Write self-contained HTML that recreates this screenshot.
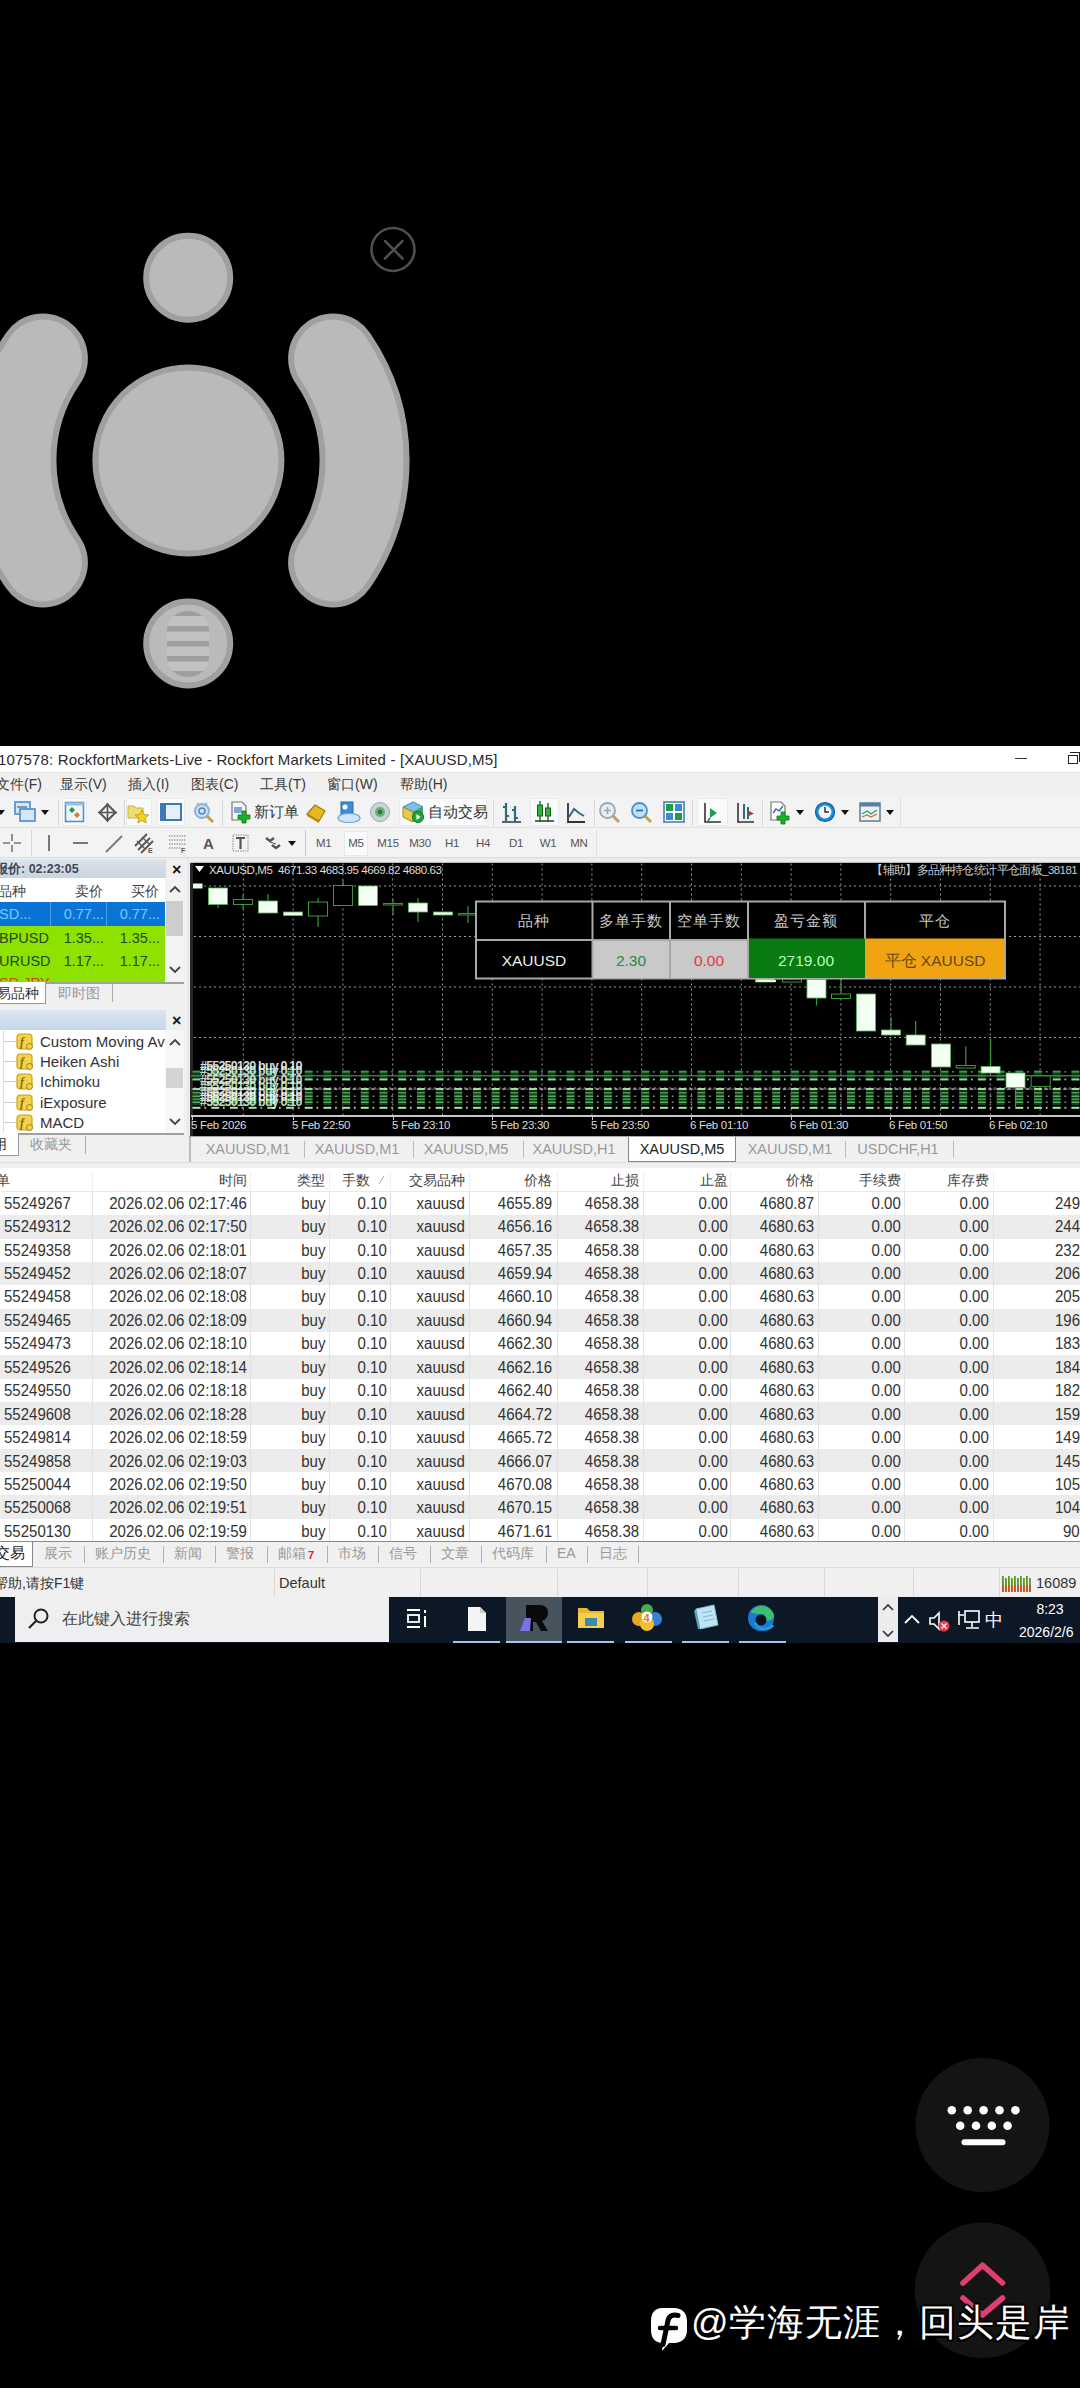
<!DOCTYPE html>
<html><head><meta charset="utf-8">
<style>
*{margin:0;padding:0;box-sizing:border-box}
html,body{width:1080px;height:2388px;background:#000;overflow:hidden;font-family:"Liberation Sans",sans-serif;position:relative}
.a{position:absolute}
.t{position:absolute;white-space:nowrap;line-height:1}
svg{position:absolute;overflow:visible}
.tl,.tr{font-size:15.8px;color:#333;transform:scaleX(0.95)}
.tl{transform-origin:left}
.tr{transform-origin:right}
</style></head><body>

<svg style="left:0;top:0" width="1080" height="745" viewBox="0 0 1080 745">
<defs><clipPath id="pill"><rect x="167" y="611" width="42" height="66" rx="21" ry="19"/></clipPath></defs>
<g fill="#bababa" stroke="#a0a0a0" stroke-width="6">
<circle cx="188.2" cy="277.8" r="42"/>
<circle cx="188.4" cy="460.5" r="93"/>
<circle cx="188.2" cy="643.5" r="42"/>
</g>
<path d="M333.1,358.5 A181,181 0 0 1 333.1,562.5" fill="none" stroke="#a0a0a0" stroke-width="90" stroke-linecap="round"/>
<path d="M333.1,358.5 A181,181 0 0 1 333.1,562.5" fill="none" stroke="#bababa" stroke-width="78" stroke-linecap="round"/>
<path d="M42.9,358.5 A181,181 0 0 0 42.9,562.5" fill="none" stroke="#a0a0a0" stroke-width="90" stroke-linecap="round"/>
<path d="M42.9,358.5 A181,181 0 0 0 42.9,562.5" fill="none" stroke="#bababa" stroke-width="78" stroke-linecap="round"/>
<g clip-path="url(#pill)">
<rect x="167" y="611" width="42" height="66" fill="#c2c2c2"/>
<g fill="#9e9e9e">
<rect x="166" y="610" width="44" height="6"/>
<rect x="166" y="626" width="44" height="5.5"/>
<rect x="166" y="641" width="44" height="5.5"/>
<rect x="166" y="656" width="44" height="5.5"/>
<rect x="166" y="671" width="44" height="7"/>
</g></g>
<circle cx="393" cy="249.5" r="21.5" fill="none" stroke="#505050" stroke-width="2.5"/>
<path d="M385,241 L402.5,258.5 M402.5,241 L385,258.5" stroke="#505050" stroke-width="2.5" stroke-linecap="round"/>
</svg>

<div class="a" style="left:0px;top:746px;width:1080px;height:897px;background:#f0f0f0;"></div>
<div class="a" style="left:0px;top:746px;width:1080px;height:26px;background:#ffffff;"></div>
<div class="t" style="left:-2px;top:752px;font-size:15px;color:#2a2a2a;letter-spacing:0.16px">107578: RockfortMarkets-Live - Rockfort Markets Limited - [XAUUSD,M5]</div>
<div class="a" style="left:1014.5px;top:757.5px;width:12.5px;height:1.5px;background:#333;"></div>
<div class="a" style="left:1070px;top:752px;width:9.5px;height:9.5px;border-top:1.5px solid #222;border-right:1.5px solid #222"></div>
<div class="a" style="left:1067.5px;top:754.5px;width:10px;height:9.5px;border:1.5px solid #222;background:#fff"></div>
<div class="a" style="left:0px;top:771.5px;width:1080px;height:1.5px;background:#e4e4e4;"></div>
<div class="a" style="left:0px;top:773px;width:1080px;height:23px;background:#f0f0f0;"></div>
<div class="a" style="left:0px;top:796px;width:1080px;height:1px;background:#d6d6d6;"></div>
<div class="t" style="left:-4px;top:777px;font-size:14px;color:#3a3a3a;">文件(F)</div>
<div class="t" style="left:60px;top:777px;font-size:14px;color:#3a3a3a;">显示(V)</div>
<div class="t" style="left:128px;top:777px;font-size:14px;color:#3a3a3a;">插入(I)</div>
<div class="t" style="left:191px;top:777px;font-size:14px;color:#3a3a3a;">图表(C)</div>
<div class="t" style="left:260px;top:777px;font-size:14px;color:#3a3a3a;">工具(T)</div>
<div class="t" style="left:327px;top:777px;font-size:14px;color:#3a3a3a;">窗口(W)</div>
<div class="t" style="left:400px;top:777px;font-size:14px;color:#3a3a3a;">帮助(H)</div>
<div class="a" style="left:0px;top:796px;width:1080px;height:32px;background:#f3f3f3;"></div>
<div class="a" style="left:0px;top:828px;width:1080px;height:30px;background:#f3f3f3;"></div>
<div class="a" style="left:0px;top:827px;width:1080px;height:1px;background:#e2e2e2;"></div>
<div class="a" style="left:0px;top:857px;width:1080px;height:1px;background:#dcdcdc;"></div>
<svg style="left:-3px;top:810px" width="8" height="5" viewBox="0 0 8 5"><path d="M0,0 L8,0 L4,5 Z" fill="#111"/></svg>
<svg style="left:14px;top:801px" width="22" height="22" viewBox="0 0 22 22"><rect x="1" y="1" width="15" height="12" fill="#d4e6f7" stroke="#4a8ac8" stroke-width="1.6"/><rect x="6" y="8" width="15" height="12" fill="#d4e6f7" stroke="#4a8ac8" stroke-width="1.6"/><rect x="3" y="5" width="10" height="2" fill="#7a9ab0"/></svg>
<svg style="left:41px;top:810px" width="8" height="5" viewBox="0 0 8 5"><path d="M0,0 L8,0 L4,5 Z" fill="#111"/></svg>
<div class="a" style="left:58px;top:800px;width:1px;height:26px;background:#d8d8d8;"></div>
<div class="a" style="left:62px;top:798px;width:25px;height:28px;background:#f9fbfd;border:1px solid #e6e9ee"></div>
<svg style="left:64px;top:801px" width="22" height="22" viewBox="0 0 22 22"><rect x="1.5" y="1.5" width="18" height="19" fill="#eef5fb" stroke="#5a8fc0" stroke-width="1.6"/><rect x="1.5" y="1.5" width="18" height="3" fill="#9cc3e6"/><path d="M5,9 l3,-3 l3,3 l-3,3z" fill="#1f9a3a"/><path d="M10,14 l3,-3 l3,3 l-3,3z" fill="#e07a30"/></svg>
<svg style="left:98px;top:803px" width="19" height="19" viewBox="0 0 19 19"><path d="M9.5,1.5 L17.5,9.5 L9.5,17.5 L1.5,9.5 Z" fill="none" stroke="#555" stroke-width="2"/><path d="M9.5,0 V19 M0,9.5 H19" stroke="#555" stroke-width="1.6"/></svg>
<div class="a" style="left:124px;top:800px;width:1px;height:26px;background:#d8d8d8;"></div>
<div class="a" style="left:126px;top:798px;width:26px;height:28px;background:#f9fbfd;border:1px solid #e6e9ee"></div>
<svg style="left:127px;top:802px" width="23" height="21" viewBox="0 0 23 21"><path d="M1,4 h6 l2,2 h7 v10 h-15z" fill="#f0dc70" stroke="#c8b040" stroke-width="1"/><path d="M15,8 l2,4.5 l4.8,0.5 l-3.6,3.2 l1,4.8 l-4.2,-2.5 l-4.2,2.5 l1,-4.8 l-3.6,-3.2 l4.8,-0.5z" fill="#f6d21c" stroke="#b09010" stroke-width="0.8"/></svg>
<div class="a" style="left:157px;top:798px;width:28px;height:28px;background:#f9fbfd;border:1px solid #e6e9ee"></div>
<svg style="left:160px;top:803px" width="22" height="18" viewBox="0 0 22 18"><rect x="1" y="1" width="20" height="16" fill="#e6f0f8" stroke="#3d7ab5" stroke-width="2"/><rect x="1" y="1" width="5" height="16" fill="#3d7ab5"/></svg>
<svg style="left:193px;top:801px" width="22" height="23" viewBox="0 0 22 23"><circle cx="9" cy="10" r="7" fill="#cfe3f3" stroke="#8fb4d6" stroke-width="2"/><circle cx="9" cy="10" r="3" fill="none" stroke="#4a8ac8" stroke-width="1.5"/><path d="M14,15 l6,6" stroke="#c8a040" stroke-width="3"/><path d="M4,2 l3,3 M14,2 l-3,3" stroke="#8fb4d6" stroke-width="1.5"/></svg>
<div class="a" style="left:222px;top:800px;width:1px;height:26px;background:#d8d8d8;"></div>
<svg style="left:230px;top:801px" width="22" height="24" viewBox="0 0 22 24"><path d="M2,1 h10 l4,4 v14 h-14z" fill="#f6f6f6" stroke="#777" stroke-width="1.2"/><rect x="4" y="6" width="8" height="6" fill="#7aa8d0"/><path d="M12,10 h4 v4 h4 v4 h-4 v4 h-4 v-4 h-4 v-4 h4z" fill="#19b02a" stroke="#0d7a18" stroke-width="0.8"/></svg>
<div class="t" style="left:254px;top:804px;font-size:15px;color:#333;">新订单</div>
<svg style="left:305px;top:802px" width="22" height="22" viewBox="0 0 22 22"><path d="M2,12 L10,3 L20,9 L14,19 Z" fill="#e8b820" stroke="#a07810" stroke-width="1.2"/><path d="M2,12 L14,19 L14,21 L2,14z" fill="#b88a10"/></svg>
<svg style="left:337px;top:801px" width="24" height="22" viewBox="0 0 24 22"><rect x="4" y="1" width="12" height="13" fill="#3b8fd8" stroke="#2a6aa8" stroke-width="1"/><circle cx="8" cy="6" r="2.5" fill="#fff"/><ellipse cx="12" cy="17" rx="11" ry="4.5" fill="#d0e6f8" stroke="#6aa0d0" stroke-width="1.2"/></svg>
<svg style="left:369px;top:801px" width="22" height="22" viewBox="0 0 22 22"><circle cx="11" cy="11" r="9.5" fill="#c9d3da" stroke="#9aa8b2" stroke-width="1"/><circle cx="11" cy="11" r="5" fill="#5fb36a"/><circle cx="11" cy="11" r="2.2" fill="#2e6e38"/></svg>
<div class="a" style="left:399px;top:798px;width:88px;height:28px;background:#f9fbfd;border:1px solid #e6e9ee"></div>
<svg style="left:401px;top:801px" width="24" height="23" viewBox="0 0 24 23"><path d="M2,6 L12,1 L22,6 L12,11z" fill="#7ac0e8" stroke="#3d8ac0" stroke-width="1"/><path d="M2,6 v10 l10,5 v-10z" fill="#e6c84a" stroke="#a08a20" stroke-width="1"/><path d="M22,6 v10 l-10,5 v-10z" fill="#4aa060"/><circle cx="17" cy="16" r="5.5" fill="#1eaa3a" stroke="#0e7a20" stroke-width="1"/><path d="M15.5,13 l4,3 l-4,3z" fill="#fff"/></svg>
<div class="t" style="left:428px;top:804px;font-size:15px;color:#333;">自动交易</div>
<div class="a" style="left:493px;top:800px;width:1px;height:26px;background:#d8d8d8;"></div>
<svg style="left:500px;top:801px" width="22" height="23" viewBox="0 0 22 23"><path d="M6,2 v18 M3,6 h3 M6,15 h3 M15,5 v15 M12,9 h3 M15,17 h3" stroke="#2d6e78" stroke-width="2.2" fill="none"/><path d="M2,21 h19" stroke="#333" stroke-width="1.5"/></svg>
<div class="a" style="left:530px;top:798px;width:29px;height:28px;background:#f9fbfd;border:1px solid #e6e9ee"></div>
<svg style="left:533px;top:800px" width="22" height="24" viewBox="0 0 22 24"><path d="M7,1 v21 M15,3 v19" stroke="#2a7a2a" stroke-width="1.5"/><rect x="4.5" y="5" width="5" height="11" fill="#30b040" stroke="#106010" stroke-width="1"/><rect x="12.5" y="8" width="5" height="8" fill="#30b040" stroke="#106010" stroke-width="1"/><path d="M2,21 h19" stroke="#333" stroke-width="1.5"/></svg>
<svg style="left:565px;top:801px" width="22" height="23" viewBox="0 0 22 23"><path d="M3,2 v19 h17" stroke="#333" stroke-width="1.8" fill="none"/><path d="M4,16 L9,8 L14,12 L19,15" stroke="#2d6e78" stroke-width="2" fill="none"/></svg>
<div class="a" style="left:594px;top:800px;width:1px;height:26px;background:#d8d8d8;"></div>
<svg style="left:598px;top:801px" width="24" height="24" viewBox="0 0 24 24"><circle cx="9.5" cy="9.5" r="7.5" fill="#e8eef2" stroke="#9aa8b2" stroke-width="1.8"/><path d="M6,9.5 h7 M9.5,6 v7" stroke="#9aa8b2" stroke-width="1.6"/><path d="M15,15 l6,6" stroke="#b8a070" stroke-width="3"/></svg>
<svg style="left:630px;top:801px" width="24" height="24" viewBox="0 0 24 24"><circle cx="9.5" cy="9.5" r="7.5" fill="#bfe0f6" stroke="#4a90c8" stroke-width="1.8"/><path d="M6,9.5 h7" stroke="#2a70a8" stroke-width="1.8"/><path d="M15,15 l6,6" stroke="#c8a040" stroke-width="3"/></svg>
<svg style="left:663px;top:801px" width="22" height="22" viewBox="0 0 22 22"><rect x="1" y="1" width="20" height="20" fill="#fff" stroke="#3d7ab5" stroke-width="1.5"/><rect x="3" y="3" width="7" height="7" fill="#1aa04a"/><rect x="12" y="3" width="7" height="7" fill="#3a8ad0"/><rect x="3" y="12" width="7" height="7" fill="#3a8ad0"/><rect x="12" y="12" width="7" height="7" fill="#1aa04a"/></svg>
<div class="a" style="left:692px;top:800px;width:1px;height:26px;background:#d8d8d8;"></div>
<div class="a" style="left:697px;top:798px;width:31px;height:28px;background:#f9fbfd;border:1px solid #e6e9ee"></div>
<svg style="left:701px;top:801px" width="22" height="23" viewBox="0 0 22 23"><path d="M4,2 v19 h16" stroke="#333" stroke-width="1.6" fill="none"/><path d="M9,7 v10 l7,-5z" fill="#1ea050"/><path d="M7,20 l2,-3" stroke="#2d6e78" stroke-width="1.5"/></svg>
<svg style="left:734px;top:801px" width="22" height="23" viewBox="0 0 22 23"><path d="M4,2 v19 h16" stroke="#333" stroke-width="1.6" fill="none"/><path d="M10,3 v15 M14,6 v12" stroke="#2d6e78" stroke-width="2"/><path d="M15,10 l5,2.5 l-5,2.5z" fill="#d03030"/></svg>
<div class="a" style="left:762px;top:800px;width:1px;height:26px;background:#d8d8d8;"></div>
<svg style="left:769px;top:801px" width="24" height="24" viewBox="0 0 24 24"><path d="M2,1 h10 l4,4 v14 h-14z" fill="#fff" stroke="#777" stroke-width="1.2"/><path d="M4,12 l3,-4 l3,2 l4,-5" stroke="#2a70a8" stroke-width="1.4" fill="none"/><path d="M12,11 h4 v4 h4 v4 h-4 v4 h-4 v-4 h-4 v-4 h4z" fill="#19b02a" stroke="#0d7a18" stroke-width="0.8"/></svg>
<svg style="left:796px;top:810px" width="8" height="5" viewBox="0 0 8 5"><path d="M0,0 L8,0 L4,5 Z" fill="#111"/></svg>
<svg style="left:814px;top:801px" width="22" height="22" viewBox="0 0 22 22"><circle cx="11" cy="11" r="9.5" fill="#1e8ad8" stroke="#0f5fa8" stroke-width="1.2"/><circle cx="11" cy="11" r="6.5" fill="#f4f8fc"/><path d="M11,6 v5 h4" stroke="#333" stroke-width="1.5" fill="none"/></svg>
<svg style="left:841px;top:810px" width="8" height="5" viewBox="0 0 8 5"><path d="M0,0 L8,0 L4,5 Z" fill="#111"/></svg>
<svg style="left:859px;top:802px" width="22" height="20" viewBox="0 0 22 20"><rect x="1" y="1" width="20" height="18" fill="#eaf2f8" stroke="#5a7fa0" stroke-width="1.5"/><rect x="1" y="1" width="20" height="3.5" fill="#5a7fa0"/><path d="M3,12 l5,-3 l4,3 l6,-4" stroke="#30a050" stroke-width="1.4" fill="none"/><path d="M3,15 l5,-2 l4,2 l6,-3" stroke="#d06a30" stroke-width="1.2" fill="none"/></svg>
<svg style="left:886px;top:810px" width="8" height="5" viewBox="0 0 8 5"><path d="M0,0 L8,0 L4,5 Z" fill="#111"/></svg>
<div class="a" style="left:900px;top:798px;width:1px;height:28px;background:#e0e0e0;"></div>
<svg style="left:2px;top:833px" width="20" height="20" viewBox="0 0 20 20"><path d="M10,1 v7 M10,12 v7 M1,10 h7 M12,10 h7" stroke="#777" stroke-width="1.6"/></svg>
<div class="a" style="left:31px;top:830px;width:1px;height:26px;background:#d8d8d8;"></div>
<div class="a" style="left:48px;top:835px;width:2px;height:16px;background:#777;"></div>
<div class="a" style="left:73px;top:842px;width:15px;height:2px;background:#777;"></div>
<svg style="left:104px;top:834px" width="20" height="20" viewBox="0 0 20 20"><path d="M2,18 L18,2" stroke="#777" stroke-width="1.8"/></svg>
<svg style="left:134px;top:833px" width="21" height="20" viewBox="0 0 21 20"><path d="M1,13 L13,1 M4,17 L16,5 M7,20 L19,8" stroke="#555" stroke-width="1.8"/><path d="M3,8 l8,8 M8,4 l8,8" stroke="#555" stroke-width="1.2"/><text x="14" y="20" font-size="7" font-weight="bold" fill="#555" font-family="Liberation Sans">E</text></svg>
<svg style="left:168px;top:834px" width="20" height="20" viewBox="0 0 20 20"><path d="M1,2 h17 M1,6 h17 M1,10 h17 M1,14 h12" stroke="#777" stroke-width="1.2" stroke-dasharray="1.5 1"/><text x="13" y="19" font-size="7" font-weight="bold" fill="#555" font-family="Liberation Sans">F</text></svg>
<div class="t" style="left:203px;top:836px;font-size:15px;color:#555;font-weight:bold">A</div>
<svg style="left:232px;top:833px" width="17" height="19" viewBox="0 0 17 19"><rect x="1" y="2" width="15" height="16" fill="none" stroke="#888" stroke-width="1" stroke-dasharray="1.5 1"/><path d="M4,5 h9 M8.5,5 v11" stroke="#555" stroke-width="2.2"/></svg>
<svg style="left:264px;top:834px" width="18" height="18" viewBox="0 0 18 18"><path d="M2,4 l4,3 l4,-3 M8,11 l4,3 l4,-3" stroke="#555" stroke-width="2.4" fill="none"/><path d="M6,8 L12,10" stroke="#555" stroke-width="1"/></svg>
<svg style="left:288px;top:841px" width="8" height="5" viewBox="0 0 8 5"><path d="M0,0 L8,0 L4,5 Z" fill="#111"/></svg>
<div class="a" style="left:305px;top:830px;width:1px;height:26px;background:#c8c8c8;"></div>
<div class="t" style="left:303.6px;width:40px;text-align:center;top:838px;font-size:11.5px;color:#555;letter-spacing:-0.3px">M1</div>
<div class="a" style="left:344px;top:831px;width:24px;height:25px;background:#f9fbfd;border:1px solid #e6e9ee"></div>
<div class="t" style="left:336px;width:40px;text-align:center;top:838px;font-size:11.5px;color:#555;letter-spacing:-0.3px">M5</div>
<div class="t" style="left:368px;width:40px;text-align:center;top:838px;font-size:11.5px;color:#555;letter-spacing:-0.3px">M15</div>
<div class="t" style="left:400px;width:40px;text-align:center;top:838px;font-size:11.5px;color:#555;letter-spacing:-0.3px">M30</div>
<div class="t" style="left:432px;width:40px;text-align:center;top:838px;font-size:11.5px;color:#555;letter-spacing:-0.3px">H1</div>
<div class="t" style="left:463px;width:40px;text-align:center;top:838px;font-size:11.5px;color:#555;letter-spacing:-0.3px">H4</div>
<div class="t" style="left:496px;width:40px;text-align:center;top:838px;font-size:11.5px;color:#555;letter-spacing:-0.3px">D1</div>
<div class="t" style="left:528px;width:40px;text-align:center;top:838px;font-size:11.5px;color:#555;letter-spacing:-0.3px">W1</div>
<div class="t" style="left:559px;width:40px;text-align:center;top:838px;font-size:11.5px;color:#555;letter-spacing:-0.3px">MN</div>
<div class="a" style="left:596px;top:830px;width:1px;height:26px;background:#e0e0e0;"></div>
<div class="a" style="left:0px;top:858px;width:189px;height:280px;background:#f0f0f0;"></div>
<div class="a" style="left:0px;top:859px;width:166px;height:19px;background:linear-gradient(#dde4ec,#c9d4e0);"></div>
<div class="t" style="left:-5px;top:862.5px;font-size:12.5px;color:#3d4856;font-weight:bold">报价: 02:23:05</div>
<div class="t" style="left:172px;top:862px;font-size:16px;color:#111;font-weight:bold">×</div>
<div class="a" style="left:0px;top:878px;width:166px;height:24px;background:#ffffff;"></div>
<div class="t" style="left:-2px;top:884px;font-size:14px;color:#444;">品种</div>
<div class="t" style="right:977px;top:884px;font-size:14px;color:#444;">卖价</div>
<div class="t" style="right:921px;top:884px;font-size:14px;color:#444;">买价</div>
<div class="a" style="left:0px;top:902px;width:165px;height:24px;background:#0a74d6;"></div>
<div class="a" style="left:50px;top:902px;width:1px;height:24px;background:#4a9ee6;"></div>
<div class="a" style="left:106px;top:902px;width:1px;height:24px;background:#4a9ee6;"></div>
<div class="t" style="left:-1px;top:907px;font-size:14.5px;color:#78c8ff;">SD...</div>
<div class="t" style="right:976px;top:907px;font-size:14.5px;color:#78c8ff;">0.77...</div>
<div class="t" style="right:920px;top:907px;font-size:14.5px;color:#78c8ff;">0.77...</div>
<div class="a" style="left:0px;top:926px;width:165px;height:56px;background:#8ee200;"></div>
<div class="t" style="left:-1px;top:931px;font-size:14.5px;color:#1f4a1a;">BPUSD</div>
<div class="t" style="right:976px;top:931px;font-size:14.5px;color:#1f4a1a;">1.35...</div>
<div class="t" style="right:920px;top:931px;font-size:14.5px;color:#1f4a1a;">1.35...</div>
<div class="t" style="left:-1px;top:954px;font-size:14.5px;color:#1f4a1a;">URUSD</div>
<div class="t" style="right:976px;top:954px;font-size:14.5px;color:#1f4a1a;">1.17...</div>
<div class="t" style="right:920px;top:954px;font-size:14.5px;color:#1f4a1a;">1.17...</div>
<div class="t" style="left:-1px;top:976px;font-size:14.5px;color:#c84a00;clip-path:inset(0 0 62% 0)">SD JPY</div>
<div class="a" style="left:165px;top:878px;width:19px;height:104px;background:#f3f3f3;"></div>
<svg style="left:168px;top:884px" width="14" height="10" viewBox="0 0 14 10"><path d="M2,8 L7,3 L12,8" stroke="#444" stroke-width="1.8" fill="none"/></svg>
<div class="a" style="left:166px;top:901px;width:17px;height:35px;background:#cdcdcd;"></div>
<svg style="left:168px;top:965px" width="14" height="10" viewBox="0 0 14 10"><path d="M2,2 L7,7 L12,2" stroke="#444" stroke-width="1.8" fill="none"/></svg>
<div class="a" style="left:0px;top:982px;width:184px;height:1.5px;background:#a0a0a0;"></div>
<div class="a" style="left:0px;top:982px;width:46px;height:22px;background:#ffffff;border:1px solid #999;border-top:none;border-left:none"></div>
<div class="t" style="left:-3px;top:986px;font-size:14px;color:#333;">易品种</div>
<div class="t" style="left:58px;top:986px;font-size:14px;color:#999;">即时图</div>
<div class="a" style="left:112px;top:984px;width:1px;height:18px;background:#aaa;"></div>
<div class="a" style="left:187px;top:858px;width:2px;height:280px;background:#e8e8e8;"></div>
<div class="a" style="left:0px;top:1010px;width:166px;height:20px;background:linear-gradient(#dbe6f2,#c5d7ea);"></div>
<div class="t" style="left:172px;top:1013px;font-size:16px;color:#111;font-weight:bold">×</div>
<div class="a" style="left:0px;top:1030px;width:184px;height:103px;background:#ffffff;"></div>
<div class="a" style="left:4px;top:1041.0px;width:12px;height:1px;background:#ccc;"></div>
<svg style="left:16px;top:1033.0px" width="18" height="18" viewBox="0 0 18 18"><rect x="1" y="1" width="15" height="15" rx="3" fill="#f3d34a" stroke="#c9a21a" stroke-width="1.2"/><text x="4" y="13" font-size="12" font-style="italic" font-weight="bold" fill="#8a6a10" font-family="Liberation Serif">f</text><circle cx="13.5" cy="13.5" r="3" fill="#f3d34a" stroke="#a08010" stroke-width="1"/></svg>
<div class="t" style="left:40px;top:1034.0px;font-size:15px;color:#333;">Custom Moving Av</div>
<div class="a" style="left:4px;top:1061.2px;width:12px;height:1px;background:#ccc;"></div>
<svg style="left:16px;top:1053.2px" width="18" height="18" viewBox="0 0 18 18"><rect x="1" y="1" width="15" height="15" rx="3" fill="#f3d34a" stroke="#c9a21a" stroke-width="1.2"/><text x="4" y="13" font-size="12" font-style="italic" font-weight="bold" fill="#8a6a10" font-family="Liberation Serif">f</text><circle cx="13.5" cy="13.5" r="3" fill="#f3d34a" stroke="#a08010" stroke-width="1"/></svg>
<div class="t" style="left:40px;top:1054.2px;font-size:15px;color:#333;">Heiken Ashi</div>
<div class="a" style="left:4px;top:1081.4px;width:12px;height:1px;background:#ccc;"></div>
<svg style="left:16px;top:1073.4px" width="18" height="18" viewBox="0 0 18 18"><rect x="1" y="1" width="15" height="15" rx="3" fill="#f3d34a" stroke="#c9a21a" stroke-width="1.2"/><text x="4" y="13" font-size="12" font-style="italic" font-weight="bold" fill="#8a6a10" font-family="Liberation Serif">f</text><circle cx="13.5" cy="13.5" r="3" fill="#f3d34a" stroke="#a08010" stroke-width="1"/></svg>
<div class="t" style="left:40px;top:1074.4px;font-size:15px;color:#333;">Ichimoku</div>
<div class="a" style="left:4px;top:1101.6px;width:12px;height:1px;background:#ccc;"></div>
<svg style="left:16px;top:1093.6px" width="18" height="18" viewBox="0 0 18 18"><rect x="1" y="1" width="15" height="15" rx="3" fill="#f3d34a" stroke="#c9a21a" stroke-width="1.2"/><text x="4" y="13" font-size="12" font-style="italic" font-weight="bold" fill="#8a6a10" font-family="Liberation Serif">f</text><circle cx="13.5" cy="13.5" r="3" fill="#f3d34a" stroke="#a08010" stroke-width="1"/></svg>
<div class="t" style="left:40px;top:1094.6px;font-size:15px;color:#333;">iExposure</div>
<div class="a" style="left:4px;top:1121.8px;width:12px;height:1px;background:#ccc;"></div>
<svg style="left:16px;top:1113.8px" width="18" height="18" viewBox="0 0 18 18"><rect x="1" y="1" width="15" height="15" rx="3" fill="#f3d34a" stroke="#c9a21a" stroke-width="1.2"/><text x="4" y="13" font-size="12" font-style="italic" font-weight="bold" fill="#8a6a10" font-family="Liberation Serif">f</text><circle cx="13.5" cy="13.5" r="3" fill="#f3d34a" stroke="#a08010" stroke-width="1"/></svg>
<div class="t" style="left:40px;top:1114.8px;font-size:15px;color:#333;">MACD</div>
<div class="a" style="left:3px;top:1030px;width:1px;height:103px;background:#ddd;"></div>
<div class="a" style="left:165px;top:1030px;width:19px;height:103px;background:#f7f7f7;"></div>
<svg style="left:168px;top:1037px" width="14" height="10" viewBox="0 0 14 10"><path d="M2,8 L7,3 L12,8" stroke="#444" stroke-width="1.8" fill="none"/></svg>
<div class="a" style="left:166px;top:1068px;width:17px;height:20px;background:#d4d4d4;"></div>
<svg style="left:168px;top:1117px" width="14" height="10" viewBox="0 0 14 10"><path d="M2,2 L7,7 L12,2" stroke="#444" stroke-width="1.8" fill="none"/></svg>
<div class="a" style="left:0px;top:1133px;width:184px;height:1.5px;background:#a0a0a0;"></div>
<div class="a" style="left:0px;top:1133px;width:19px;height:23px;background:#ffffff;border:1px solid #999;border-top:none;border-left:none"></div>
<div class="t" style="left:-7px;top:1137px;font-size:14px;color:#333;">用</div>
<div class="t" style="left:30px;top:1137px;font-size:14px;color:#999;">收藏夹</div>
<div class="a" style="left:85px;top:1136px;width:1px;height:18px;background:#aaa;"></div>
<div class="a" style="left:189px;top:858px;width:891px;height:5px;background:#ececec;"></div>
<div class="a" style="left:191px;top:861.5px;width:889px;height:1.5px;background:#b8b8b8;"></div>
<div class="a" style="left:190px;top:863px;width:890px;height:273px;background:#000;"></div>
<div class="a" style="left:190px;top:863px;width:3px;height:273px;background:#262626;"></div>
<div class="a" style="left:189px;top:1136px;width:891px;height:3px;background:#a8a8a8;"></div>
<svg style="left:191px;top:860px" width="889" height="277" viewBox="0 0 889 277"><path d="M52.3,3.5 V255" stroke="#9a9a9a" stroke-width="1" stroke-dasharray="2 3"/><path d="M102.1,3.5 V255" stroke="#9a9a9a" stroke-width="1" stroke-dasharray="2 3"/><path d="M151.9,3.5 V255" stroke="#9a9a9a" stroke-width="1" stroke-dasharray="2 3"/><path d="M201.7,3.5 V255" stroke="#9a9a9a" stroke-width="1" stroke-dasharray="2 3"/><path d="M251.5,3.5 V255" stroke="#9a9a9a" stroke-width="1" stroke-dasharray="2 3"/><path d="M301.3,3.5 V255" stroke="#9a9a9a" stroke-width="1" stroke-dasharray="2 3"/><path d="M351.1,3.5 V255" stroke="#9a9a9a" stroke-width="1" stroke-dasharray="2 3"/><path d="M400.9,3.5 V255" stroke="#9a9a9a" stroke-width="1" stroke-dasharray="2 3"/><path d="M450.7,3.5 V255" stroke="#9a9a9a" stroke-width="1" stroke-dasharray="2 3"/><path d="M500.5,3.5 V255" stroke="#9a9a9a" stroke-width="1" stroke-dasharray="2 3"/><path d="M550.3,3.5 V255" stroke="#9a9a9a" stroke-width="1" stroke-dasharray="2 3"/><path d="M600.1,3.5 V255" stroke="#9a9a9a" stroke-width="1" stroke-dasharray="2 3"/><path d="M649.9,3.5 V255" stroke="#9a9a9a" stroke-width="1" stroke-dasharray="2 3"/><path d="M699.7,3.5 V255" stroke="#9a9a9a" stroke-width="1" stroke-dasharray="2 3"/><path d="M749.5,3.5 V255" stroke="#9a9a9a" stroke-width="1" stroke-dasharray="2 3"/><path d="M799.3,3.5 V255" stroke="#9a9a9a" stroke-width="1" stroke-dasharray="2 3"/><path d="M849.1,3.5 V255" stroke="#9a9a9a" stroke-width="1" stroke-dasharray="2 3"/><path d="M3,26 H889" stroke="#9a9a9a" stroke-width="1" stroke-dasharray="2 3"/><path d="M3,76.5 H889" stroke="#9a9a9a" stroke-width="1" stroke-dasharray="2 3"/><path d="M3,127 H889" stroke="#9a9a9a" stroke-width="1" stroke-dasharray="2 3"/><path d="M3,177.5 H889" stroke="#9a9a9a" stroke-width="1" stroke-dasharray="2 3"/><path d="M3,228 H889" stroke="#9a9a9a" stroke-width="1" stroke-dasharray="2 3"/></svg>
<svg style="left:195px;top:866px" width="10" height="7" viewBox="0 0 10 7"><path d="M0,0 H9 L4.5,6z" fill="#fff"/></svg>
<div class="t" style="left:209px;top:865px;font-size:11.5px;color:#ddd;letter-spacing:-0.4px">XAUUSD,M5&nbsp;&nbsp;4671.33 4683.95 4669.82 4680.63</div>
<div class="t" style="right:3px;top:865px;font-size:11.5px;color:#ccc;letter-spacing:-0.6px">【辅助】多品种持仓统计平仓面板_38181</div>
<svg style="left:0px;top:0px" width="1080" height="1200" viewBox="0 0 1080 1200"><defs>
<pattern id="pb" x="510.4" y="1070" width="18.7" height="40" patternUnits="userSpaceOnUse">
<rect x="0" y="0" width="8" height="11" fill="#0f3a16"/>
<rect x="0" y="1" width="8" height="1.6" fill="#3f9a4a"/>
<rect x="0" y="5.2" width="18.7" height="1.2" fill="#4a9058"/>
<rect x="0" y="8.5" width="8" height="1.8" fill="#8ccf96"/>
<rect x="11.8" y="8.5" width="1.6" height="1.8" fill="#bbb"/>
<rect x="11.8" y="1" width="1.6" height="1.6" fill="#888"/>
<rect x="0" y="18" width="8" height="2.2" fill="#a8d8ac"/>
<rect x="10.5" y="18.3" width="3.5" height="1.6" fill="#aaa"/>
<rect x="15" y="18.6" width="3" height="1" fill="#777"/>
<rect x="0" y="21" width="8" height="14" fill="#123f19"/>
<rect x="0" y="22" width="8" height="1.5" fill="#3f9a4a"/>
<rect x="0" y="25.5" width="8" height="1.5" fill="#5aaa62"/>
<rect x="0" y="28.5" width="8" height="1.5" fill="#3f9a4a"/>
<rect x="0" y="31.5" width="8" height="1.5" fill="#5aaa62"/>
<rect x="11.8" y="25.5" width="1.6" height="1.5" fill="#999"/>
<rect x="11.8" y="31.5" width="1.6" height="1.5" fill="#999"/>
<rect x="0" y="36.8" width="8" height="2" fill="#b0e0b0"/>
<rect x="11.8" y="36.8" width="1.6" height="2" fill="#ccc"/>
</pattern>
</defs><rect x="191" y="1070" width="889" height="40" fill="url(#pb)"/></svg>
<svg style="left:0px;top:0px" width="1080" height="1200" viewBox="0 0 1080 1200"><path d="M218.0,888 V908" stroke="#3a9a3a" stroke-width="1.2"/><rect x="208.5" y="888" width="19" height="16.5" fill="#f4fff4" stroke="#5aba5a" stroke-width="0.8"/><path d="M243.0,895 V909" stroke="#3a9a3a" stroke-width="1.2"/><rect x="233.5" y="899.5" width="19" height="5.0" fill="#000" stroke="#3a9a3a" stroke-width="1"/><path d="M268.0,894 V913" stroke="#3a9a3a" stroke-width="1.2"/><rect x="258.5" y="901" width="19" height="12" fill="#f4fff4" stroke="#5aba5a" stroke-width="0.8"/><path d="M293.0,912 V915.5" stroke="#3a9a3a" stroke-width="1.2"/><rect x="283.5" y="912" width="19" height="3.5" fill="#f4fff4" stroke="#5aba5a" stroke-width="0.8"/><path d="M318.0,898 V927" stroke="#3a9a3a" stroke-width="1.2"/><rect x="308.5" y="902" width="19" height="14" fill="#000" stroke="#3a9a3a" stroke-width="1"/><path d="M343.0,880 V905.5" stroke="#3a9a3a" stroke-width="1.2"/><rect x="333.5" y="885.5" width="19" height="20.0" fill="#000" stroke="#3a9a3a" stroke-width="1"/><path d="M368.0,886 V905.5" stroke="#3a9a3a" stroke-width="1.2"/><rect x="358.5" y="886" width="19" height="19.5" fill="#f4fff4" stroke="#5aba5a" stroke-width="0.8"/><path d="M393.0,899 V915" stroke="#3a9a3a" stroke-width="1.2"/><rect x="383.5" y="903.5" width="19" height="1.5" fill="#000" stroke="#3a9a3a" stroke-width="1"/><path d="M418.0,898 V922" stroke="#3a9a3a" stroke-width="1.2"/><rect x="408.5" y="903" width="19" height="9" fill="#f4fff4" stroke="#5aba5a" stroke-width="0.8"/><path d="M443.0,912 V915" stroke="#3a9a3a" stroke-width="1.2"/><rect x="433.5" y="912" width="19" height="3" fill="#f4fff4" stroke="#5aba5a" stroke-width="0.8"/><path d="M468.0,906 V923" stroke="#3a9a3a" stroke-width="1.2"/><rect x="458.5" y="913.5" width="19" height="1.5" fill="#000" stroke="#3a9a3a" stroke-width="1"/><path d="M765.0,979 V982" stroke="#3a9a3a" stroke-width="1.2"/><rect x="755.5" y="979" width="19" height="3" fill="#f4fff4" stroke="#5aba5a" stroke-width="0.8"/><path d="M792.0,979 V982" stroke="#3a9a3a" stroke-width="1.2"/><rect x="782.5" y="979" width="19" height="3" fill="#000" stroke="#3a9a3a" stroke-width="1"/><path d="M816.5,979.5 V1005.5" stroke="#3a9a3a" stroke-width="1.2"/><rect x="807.0" y="979.5" width="19" height="18.5" fill="#f4fff4" stroke="#5aba5a" stroke-width="0.8"/><path d="M841.0,979 V999" stroke="#3a9a3a" stroke-width="1.2"/><rect x="831.5" y="994" width="19" height="4.5" fill="#000" stroke="#3a9a3a" stroke-width="1"/><path d="M866.0,994 V1031" stroke="#3a9a3a" stroke-width="1.2"/><rect x="856.5" y="994" width="19" height="37" fill="#f4fff4" stroke="#5aba5a" stroke-width="0.8"/><path d="M891.0,1017 V1035" stroke="#3a9a3a" stroke-width="1.2"/><rect x="881.5" y="1030" width="19" height="5" fill="#f4fff4" stroke="#5aba5a" stroke-width="0.8"/><path d="M915.7,1021 V1045" stroke="#3a9a3a" stroke-width="1.2"/><rect x="906.2" y="1035" width="19" height="10" fill="#f4fff4" stroke="#5aba5a" stroke-width="0.8"/><path d="M941.0,1044 V1067" stroke="#3a9a3a" stroke-width="1.2"/><rect x="931.5" y="1044" width="19" height="23" fill="#f4fff4" stroke="#5aba5a" stroke-width="0.8"/><path d="M965.8,1046.6 V1068" stroke="#3a9a3a" stroke-width="1.2"/><rect x="956.3" y="1065.5" width="19" height="2.5" fill="#000" stroke="#3a9a3a" stroke-width="1"/><path d="M990.6,1038.7 V1073" stroke="#3a9a3a" stroke-width="1.2"/><rect x="981.1" y="1066.5" width="19" height="6.5" fill="#f4fff4" stroke="#5aba5a" stroke-width="0.8"/><path d="M1015.5,1073 V1108" stroke="#3a9a3a" stroke-width="1.2"/><rect x="1006.0" y="1073" width="19" height="14.5" fill="#f4fff4" stroke="#5aba5a" stroke-width="0.8"/><path d="M1040.7,1076 V1086.6" stroke="#3a9a3a" stroke-width="1.2"/><rect x="1031.2" y="1076" width="19" height="10.599999999999909" fill="#000" stroke="#3a9a3a" stroke-width="1"/><rect x="193" y="883.5" width="9.5" height="5" fill="#e6ffe6"/></svg>
<div class="t" style="left:200px;top:1060px;font-size:12.5px;color:#fff;font-weight:bold;letter-spacing:-0.8px;opacity:0.85">#55250130 buy 0.10</div>
<div class="t" style="left:200px;top:1065px;font-size:12.5px;color:#dfe;font-weight:bold;letter-spacing:-0.8px;opacity:0.85">#55250130 buy 0.10</div>
<div class="t" style="left:200px;top:1074px;font-size:12.5px;color:#eee;font-weight:bold;letter-spacing:-0.8px;opacity:0.85">#55250130 buy 0.10</div>
<div class="t" style="left:200px;top:1080px;font-size:12.5px;color:#cfc;font-weight:bold;letter-spacing:-0.8px;opacity:0.85">#55250130 buy 0.10</div>
<div class="t" style="left:200px;top:1086px;font-size:12.5px;color:#eee;font-weight:bold;letter-spacing:-0.8px;opacity:0.85">#55250130 buy 0.10</div>
<div class="t" style="left:200px;top:1091px;font-size:12.5px;color:#fff;font-weight:bold;letter-spacing:-0.8px;opacity:0.85">#55250130 buy 0.10</div>
<div class="t" style="left:200px;top:1096px;font-size:12.5px;color:#dfd;font-weight:bold;letter-spacing:-0.8px;opacity:0.85">#55250130 buy 0.10</div>
<div class="a" style="left:191px;top:1115px;width:889px;height:1.5px;background:#c8c8c8;"></div>
<div class="a" style="left:192px;top:1116px;width:1px;height:4px;background:#c8c8c8;"></div>
<div class="t" style="left:191px;top:1120px;font-size:11.5px;color:#ddd;letter-spacing:-0.3px">5 Feb 2026</div>
<div class="a" style="left:293px;top:1116px;width:1px;height:4px;background:#c8c8c8;"></div>
<div class="t" style="left:292px;top:1120px;font-size:11.5px;color:#ddd;letter-spacing:-0.3px">5 Feb 22:50</div>
<div class="a" style="left:393px;top:1116px;width:1px;height:4px;background:#c8c8c8;"></div>
<div class="t" style="left:392px;top:1120px;font-size:11.5px;color:#ddd;letter-spacing:-0.3px">5 Feb 23:10</div>
<div class="a" style="left:492px;top:1116px;width:1px;height:4px;background:#c8c8c8;"></div>
<div class="t" style="left:491px;top:1120px;font-size:11.5px;color:#ddd;letter-spacing:-0.3px">5 Feb 23:30</div>
<div class="a" style="left:592px;top:1116px;width:1px;height:4px;background:#c8c8c8;"></div>
<div class="t" style="left:591px;top:1120px;font-size:11.5px;color:#ddd;letter-spacing:-0.3px">5 Feb 23:50</div>
<div class="a" style="left:691px;top:1116px;width:1px;height:4px;background:#c8c8c8;"></div>
<div class="t" style="left:690px;top:1120px;font-size:11.5px;color:#ddd;letter-spacing:-0.3px">6 Feb 01:10</div>
<div class="a" style="left:791px;top:1116px;width:1px;height:4px;background:#c8c8c8;"></div>
<div class="t" style="left:790px;top:1120px;font-size:11.5px;color:#ddd;letter-spacing:-0.3px">6 Feb 01:30</div>
<div class="a" style="left:890px;top:1116px;width:1px;height:4px;background:#c8c8c8;"></div>
<div class="t" style="left:889px;top:1120px;font-size:11.5px;color:#ddd;letter-spacing:-0.3px">6 Feb 01:50</div>
<div class="a" style="left:990px;top:1116px;width:1px;height:4px;background:#c8c8c8;"></div>
<div class="t" style="left:989px;top:1120px;font-size:11.5px;color:#ddd;letter-spacing:-0.3px">6 Feb 02:10</div>
<svg style="left:0px;top:0px" width="1080" height="1200" viewBox="0 0 1080 1200"><rect x="476" y="901.5" width="529" height="77" fill="#000" stroke="#a8a8a8" stroke-width="2"/><rect x="593" y="941" width="77" height="37" fill="#c9c9c9"/><rect x="671" y="941" width="77" height="37" fill="#c9c9c9"/><path d="M476,940 H1005 M592.5,901.5 V978 M670,901.5 V978 M748,901.5 V978 M865,901.5 V978" stroke="#a8a8a8" stroke-width="2"/><rect x="749" y="938.5" width="116" height="39.5" fill="#0a7a12"/><rect x="865" y="938.5" width="140" height="39.5" fill="#f0a412"/><path d="M1005,938 V979" stroke="#a8a8a8" stroke-width="1.5"/></svg>
<div class="t" style="left:474px;width:120px;text-align:center;top:914px;font-size:15px;color:#c8c8c8;font-family:'Liberation Serif',serif;letter-spacing:1px">品种</div>
<div class="t" style="left:571px;width:120px;text-align:center;top:914px;font-size:15px;color:#c8c8c8;font-family:'Liberation Serif',serif;letter-spacing:1px">多单手数</div>
<div class="t" style="left:649px;width:120px;text-align:center;top:914px;font-size:15px;color:#c8c8c8;font-family:'Liberation Serif',serif;letter-spacing:1px">空单手数</div>
<div class="t" style="left:746px;width:120px;text-align:center;top:914px;font-size:15px;color:#c8c8c8;font-family:'Liberation Serif',serif;letter-spacing:1px">盈亏金额</div>
<div class="t" style="left:875px;width:120px;text-align:center;top:914px;font-size:15px;color:#c8c8c8;font-family:'Liberation Serif',serif;letter-spacing:1px">平仓</div>
<div class="t" style="left:464px;width:140px;text-align:center;top:952.5px;font-size:15.5px;color:#eee">XAUUSD</div>
<div class="t" style="left:561px;width:140px;text-align:center;top:952.5px;font-size:15.5px;color:#2a8a3a">2.30</div>
<div class="t" style="left:639px;width:140px;text-align:center;top:952.5px;font-size:15.5px;color:#e03a3a">0.00</div>
<div class="t" style="left:736px;width:140px;text-align:center;top:952.5px;font-size:15.5px;color:#b8ffb8">2719.00</div>
<div class="t" style="left:865px;width:140px;text-align:center;top:952.5px;font-size:15.5px;color:#6a4405"><span style="font-family:Liberation Serif,serif">平仓</span> XAUUSD</div>
<div class="a" style="left:758px;top:980px;width:18px;height:2px;background:#dfd;"></div>
<div class="a" style="left:189px;top:1137px;width:891px;height:25px;background:#f0f0f0;"></div>
<div class="t" style="left:193px;width:110px;text-align:center;top:1142px;font-size:14.5px;color:#999">XAUUSD,M1</div>
<div class="t" style="left:302px;width:110px;text-align:center;top:1142px;font-size:14.5px;color:#999">XAUUSD,M1</div>
<div class="t" style="left:411px;width:110px;text-align:center;top:1142px;font-size:14.5px;color:#999">XAUUSD,M5</div>
<div class="t" style="left:519px;width:110px;text-align:center;top:1142px;font-size:14.5px;color:#999">XAUUSD,H1</div>
<div class="a" style="left:628px;top:1137px;width:108px;height:25px;background:#fff;border:1px solid #888;border-top:none"></div>
<div class="t" style="left:627px;width:110px;text-align:center;top:1142px;font-size:14.5px;color:#222">XAUUSD,M5</div>
<div class="t" style="left:735px;width:110px;text-align:center;top:1142px;font-size:14.5px;color:#999">XAUUSD,M1</div>
<div class="t" style="left:843px;width:110px;text-align:center;top:1142px;font-size:14.5px;color:#999">USDCHF,H1</div>
<div class="a" style="left:303.5px;top:1141px;width:1px;height:17px;background:#bbb;"></div>
<div class="a" style="left:413px;top:1141px;width:1px;height:17px;background:#bbb;"></div>
<div class="a" style="left:522.5px;top:1141px;width:1px;height:17px;background:#bbb;"></div>
<div class="a" style="left:845px;top:1141px;width:1px;height:17px;background:#bbb;"></div>
<div class="a" style="left:953px;top:1141px;width:1px;height:17px;background:#bbb;"></div>
<div class="a" style="left:189px;top:1162px;width:891px;height:6px;background:#f0f0f0;"></div>
<div class="a" style="left:189px;top:1137px;width:1.5px;height:25px;background:#bbb;"></div>
<div class="a" style="left:0px;top:1162px;width:1080px;height:1px;background:#e0e0e0;"></div>
<div class="a" style="left:0px;top:1163px;width:1080px;height:5px;background:#f0f0f0;"></div>
<div class="a" style="left:0px;top:1168px;width:1080px;height:24px;background:#ffffff;"></div>
<div class="a" style="left:0px;top:1191px;width:1080px;height:1px;background:#e8e8e8;"></div>
<div class="t" style="left:-4px;top:1173px;font-size:14px;color:#444;">单</div>
<div class="t" style="right:833.3px;top:1173px;font-size:14px;color:#444;">时间</div>
<div class="t" style="right:755px;top:1173px;font-size:14px;color:#444;">类型</div>
<div class="t" style="right:710px;top:1173px;font-size:14px;color:#444;">手数</div>
<div class="t" style="right:615px;top:1173px;font-size:14px;color:#444;">交易品种</div>
<div class="t" style="right:528.3px;top:1173px;font-size:14px;color:#444;">价格</div>
<div class="t" style="right:440.70000000000005px;top:1173px;font-size:14px;color:#444;">止损</div>
<div class="t" style="right:352.5px;top:1173px;font-size:14px;color:#444;">止盈</div>
<div class="t" style="right:266px;top:1173px;font-size:14px;color:#444;">价格</div>
<div class="t" style="right:179px;top:1173px;font-size:14px;color:#444;">手续费</div>
<div class="t" style="right:91.5px;top:1173px;font-size:14px;color:#444;">库存费</div>
<svg style="left:378px;top:1175px" width="8" height="10" viewBox="0 0 8 10"><path d="M1,9 L6,1" stroke="#aaa" stroke-width="1"/></svg>
<div class="a" style="left:0px;top:1192.0px;width:1080px;height:23.73px;background:#ffffff;"></div>
<div class="a" style="left:0px;top:1215.33px;width:1080px;height:23.73px;background:#ececec;"></div>
<div class="a" style="left:0px;top:1238.66px;width:1080px;height:23.73px;background:#ffffff;"></div>
<div class="a" style="left:0px;top:1261.99px;width:1080px;height:23.73px;background:#ececec;"></div>
<div class="a" style="left:0px;top:1285.32px;width:1080px;height:23.73px;background:#ffffff;"></div>
<div class="a" style="left:0px;top:1308.65px;width:1080px;height:23.73px;background:#ececec;"></div>
<div class="a" style="left:0px;top:1331.98px;width:1080px;height:23.73px;background:#ffffff;"></div>
<div class="a" style="left:0px;top:1355.31px;width:1080px;height:23.73px;background:#ececec;"></div>
<div class="a" style="left:0px;top:1378.64px;width:1080px;height:23.73px;background:#ffffff;"></div>
<div class="a" style="left:0px;top:1401.97px;width:1080px;height:23.73px;background:#ececec;"></div>
<div class="a" style="left:0px;top:1425.3px;width:1080px;height:23.73px;background:#ffffff;"></div>
<div class="a" style="left:0px;top:1448.63px;width:1080px;height:23.73px;background:#ececec;"></div>
<div class="a" style="left:0px;top:1471.96px;width:1080px;height:23.73px;background:#ffffff;"></div>
<div class="a" style="left:0px;top:1495.29px;width:1080px;height:23.73px;background:#ececec;"></div>
<div class="a" style="left:0px;top:1518.62px;width:1080px;height:23.73px;background:#ffffff;"></div>
<div class="a" style="left:91.5px;top:1172px;width:1px;height:20px;background:#efefef;"></div>
<div class="a" style="left:91.5px;top:1192px;width:1px;height:350px;background:#e2e2e2;"></div>
<div class="a" style="left:250px;top:1172px;width:1px;height:20px;background:#efefef;"></div>
<div class="a" style="left:250px;top:1192px;width:1px;height:350px;background:#e2e2e2;"></div>
<div class="a" style="left:328.5px;top:1172px;width:1px;height:20px;background:#efefef;"></div>
<div class="a" style="left:328.5px;top:1192px;width:1px;height:350px;background:#e2e2e2;"></div>
<div class="a" style="left:390px;top:1172px;width:1px;height:20px;background:#efefef;"></div>
<div class="a" style="left:390px;top:1192px;width:1px;height:350px;background:#e2e2e2;"></div>
<div class="a" style="left:468.5px;top:1172px;width:1px;height:20px;background:#efefef;"></div>
<div class="a" style="left:468.5px;top:1192px;width:1px;height:350px;background:#e2e2e2;"></div>
<div class="a" style="left:556.5px;top:1172px;width:1px;height:20px;background:#efefef;"></div>
<div class="a" style="left:556.5px;top:1192px;width:1px;height:350px;background:#e2e2e2;"></div>
<div class="a" style="left:642.5px;top:1172px;width:1px;height:20px;background:#efefef;"></div>
<div class="a" style="left:642.5px;top:1192px;width:1px;height:350px;background:#e2e2e2;"></div>
<div class="a" style="left:730px;top:1172px;width:1px;height:20px;background:#efefef;"></div>
<div class="a" style="left:730px;top:1192px;width:1px;height:350px;background:#e2e2e2;"></div>
<div class="a" style="left:817.5px;top:1172px;width:1px;height:20px;background:#efefef;"></div>
<div class="a" style="left:817.5px;top:1192px;width:1px;height:350px;background:#e2e2e2;"></div>
<div class="a" style="left:904px;top:1172px;width:1px;height:20px;background:#efefef;"></div>
<div class="a" style="left:904px;top:1192px;width:1px;height:350px;background:#e2e2e2;"></div>
<div class="a" style="left:992.5px;top:1172px;width:1px;height:20px;background:#efefef;"></div>
<div class="a" style="left:992.5px;top:1192px;width:1px;height:350px;background:#e2e2e2;"></div>
<div class="t tl" style="left:4px;top:1195.6px">55249267</div>
<div class="t tr" style="right:833.3px;top:1195.6px">2026.02.06 02:17:46</div>
<div class="t tr" style="right:755px;top:1195.6px">buy</div>
<div class="t tr" style="right:693.3px;top:1195.6px">0.10</div>
<div class="t tr" style="right:615px;top:1195.6px">xauusd</div>
<div class="t tr" style="right:528.3px;top:1195.6px">4655.89</div>
<div class="t tr" style="right:440.70000000000005px;top:1195.6px">4658.38</div>
<div class="t tr" style="right:352.5px;top:1195.6px">0.00</div>
<div class="t tr" style="right:266px;top:1195.6px">4680.87</div>
<div class="t tr" style="right:179px;top:1195.6px">0.00</div>
<div class="t tr" style="right:91.5px;top:1195.6px">0.00</div>
<div class="t tl" style="left:1055px;top:1195.6px">249.00</div>
<div class="t tl" style="left:4px;top:1219.05px">55249312</div>
<div class="t tr" style="right:833.3px;top:1219.05px">2026.02.06 02:17:50</div>
<div class="t tr" style="right:755px;top:1219.05px">buy</div>
<div class="t tr" style="right:693.3px;top:1219.05px">0.10</div>
<div class="t tr" style="right:615px;top:1219.05px">xauusd</div>
<div class="t tr" style="right:528.3px;top:1219.05px">4656.16</div>
<div class="t tr" style="right:440.70000000000005px;top:1219.05px">4658.38</div>
<div class="t tr" style="right:352.5px;top:1219.05px">0.00</div>
<div class="t tr" style="right:266px;top:1219.05px">4680.63</div>
<div class="t tr" style="right:179px;top:1219.05px">0.00</div>
<div class="t tr" style="right:91.5px;top:1219.05px">0.00</div>
<div class="t tl" style="left:1055px;top:1219.05px">244.00</div>
<div class="t tl" style="left:4px;top:1242.5px">55249358</div>
<div class="t tr" style="right:833.3px;top:1242.5px">2026.02.06 02:18:01</div>
<div class="t tr" style="right:755px;top:1242.5px">buy</div>
<div class="t tr" style="right:693.3px;top:1242.5px">0.10</div>
<div class="t tr" style="right:615px;top:1242.5px">xauusd</div>
<div class="t tr" style="right:528.3px;top:1242.5px">4657.35</div>
<div class="t tr" style="right:440.70000000000005px;top:1242.5px">4658.38</div>
<div class="t tr" style="right:352.5px;top:1242.5px">0.00</div>
<div class="t tr" style="right:266px;top:1242.5px">4680.63</div>
<div class="t tr" style="right:179px;top:1242.5px">0.00</div>
<div class="t tr" style="right:91.5px;top:1242.5px">0.00</div>
<div class="t tl" style="left:1055px;top:1242.5px">232.00</div>
<div class="t tl" style="left:4px;top:1265.95px">55249452</div>
<div class="t tr" style="right:833.3px;top:1265.95px">2026.02.06 02:18:07</div>
<div class="t tr" style="right:755px;top:1265.95px">buy</div>
<div class="t tr" style="right:693.3px;top:1265.95px">0.10</div>
<div class="t tr" style="right:615px;top:1265.95px">xauusd</div>
<div class="t tr" style="right:528.3px;top:1265.95px">4659.94</div>
<div class="t tr" style="right:440.70000000000005px;top:1265.95px">4658.38</div>
<div class="t tr" style="right:352.5px;top:1265.95px">0.00</div>
<div class="t tr" style="right:266px;top:1265.95px">4680.63</div>
<div class="t tr" style="right:179px;top:1265.95px">0.00</div>
<div class="t tr" style="right:91.5px;top:1265.95px">0.00</div>
<div class="t tl" style="left:1055px;top:1265.95px">206.00</div>
<div class="t tl" style="left:4px;top:1289.4px">55249458</div>
<div class="t tr" style="right:833.3px;top:1289.4px">2026.02.06 02:18:08</div>
<div class="t tr" style="right:755px;top:1289.4px">buy</div>
<div class="t tr" style="right:693.3px;top:1289.4px">0.10</div>
<div class="t tr" style="right:615px;top:1289.4px">xauusd</div>
<div class="t tr" style="right:528.3px;top:1289.4px">4660.10</div>
<div class="t tr" style="right:440.70000000000005px;top:1289.4px">4658.38</div>
<div class="t tr" style="right:352.5px;top:1289.4px">0.00</div>
<div class="t tr" style="right:266px;top:1289.4px">4680.63</div>
<div class="t tr" style="right:179px;top:1289.4px">0.00</div>
<div class="t tr" style="right:91.5px;top:1289.4px">0.00</div>
<div class="t tl" style="left:1055px;top:1289.4px">205.00</div>
<div class="t tl" style="left:4px;top:1312.85px">55249465</div>
<div class="t tr" style="right:833.3px;top:1312.85px">2026.02.06 02:18:09</div>
<div class="t tr" style="right:755px;top:1312.85px">buy</div>
<div class="t tr" style="right:693.3px;top:1312.85px">0.10</div>
<div class="t tr" style="right:615px;top:1312.85px">xauusd</div>
<div class="t tr" style="right:528.3px;top:1312.85px">4660.94</div>
<div class="t tr" style="right:440.70000000000005px;top:1312.85px">4658.38</div>
<div class="t tr" style="right:352.5px;top:1312.85px">0.00</div>
<div class="t tr" style="right:266px;top:1312.85px">4680.63</div>
<div class="t tr" style="right:179px;top:1312.85px">0.00</div>
<div class="t tr" style="right:91.5px;top:1312.85px">0.00</div>
<div class="t tl" style="left:1055px;top:1312.85px">196.00</div>
<div class="t tl" style="left:4px;top:1336.3px">55249473</div>
<div class="t tr" style="right:833.3px;top:1336.3px">2026.02.06 02:18:10</div>
<div class="t tr" style="right:755px;top:1336.3px">buy</div>
<div class="t tr" style="right:693.3px;top:1336.3px">0.10</div>
<div class="t tr" style="right:615px;top:1336.3px">xauusd</div>
<div class="t tr" style="right:528.3px;top:1336.3px">4662.30</div>
<div class="t tr" style="right:440.70000000000005px;top:1336.3px">4658.38</div>
<div class="t tr" style="right:352.5px;top:1336.3px">0.00</div>
<div class="t tr" style="right:266px;top:1336.3px">4680.63</div>
<div class="t tr" style="right:179px;top:1336.3px">0.00</div>
<div class="t tr" style="right:91.5px;top:1336.3px">0.00</div>
<div class="t tl" style="left:1055px;top:1336.3px">183.00</div>
<div class="t tl" style="left:4px;top:1359.75px">55249526</div>
<div class="t tr" style="right:833.3px;top:1359.75px">2026.02.06 02:18:14</div>
<div class="t tr" style="right:755px;top:1359.75px">buy</div>
<div class="t tr" style="right:693.3px;top:1359.75px">0.10</div>
<div class="t tr" style="right:615px;top:1359.75px">xauusd</div>
<div class="t tr" style="right:528.3px;top:1359.75px">4662.16</div>
<div class="t tr" style="right:440.70000000000005px;top:1359.75px">4658.38</div>
<div class="t tr" style="right:352.5px;top:1359.75px">0.00</div>
<div class="t tr" style="right:266px;top:1359.75px">4680.63</div>
<div class="t tr" style="right:179px;top:1359.75px">0.00</div>
<div class="t tr" style="right:91.5px;top:1359.75px">0.00</div>
<div class="t tl" style="left:1055px;top:1359.75px">184.00</div>
<div class="t tl" style="left:4px;top:1383.2px">55249550</div>
<div class="t tr" style="right:833.3px;top:1383.2px">2026.02.06 02:18:18</div>
<div class="t tr" style="right:755px;top:1383.2px">buy</div>
<div class="t tr" style="right:693.3px;top:1383.2px">0.10</div>
<div class="t tr" style="right:615px;top:1383.2px">xauusd</div>
<div class="t tr" style="right:528.3px;top:1383.2px">4662.40</div>
<div class="t tr" style="right:440.70000000000005px;top:1383.2px">4658.38</div>
<div class="t tr" style="right:352.5px;top:1383.2px">0.00</div>
<div class="t tr" style="right:266px;top:1383.2px">4680.63</div>
<div class="t tr" style="right:179px;top:1383.2px">0.00</div>
<div class="t tr" style="right:91.5px;top:1383.2px">0.00</div>
<div class="t tl" style="left:1055px;top:1383.2px">182.00</div>
<div class="t tl" style="left:4px;top:1406.65px">55249608</div>
<div class="t tr" style="right:833.3px;top:1406.65px">2026.02.06 02:18:28</div>
<div class="t tr" style="right:755px;top:1406.65px">buy</div>
<div class="t tr" style="right:693.3px;top:1406.65px">0.10</div>
<div class="t tr" style="right:615px;top:1406.65px">xauusd</div>
<div class="t tr" style="right:528.3px;top:1406.65px">4664.72</div>
<div class="t tr" style="right:440.70000000000005px;top:1406.65px">4658.38</div>
<div class="t tr" style="right:352.5px;top:1406.65px">0.00</div>
<div class="t tr" style="right:266px;top:1406.65px">4680.63</div>
<div class="t tr" style="right:179px;top:1406.65px">0.00</div>
<div class="t tr" style="right:91.5px;top:1406.65px">0.00</div>
<div class="t tl" style="left:1055px;top:1406.65px">159.00</div>
<div class="t tl" style="left:4px;top:1430.1px">55249814</div>
<div class="t tr" style="right:833.3px;top:1430.1px">2026.02.06 02:18:59</div>
<div class="t tr" style="right:755px;top:1430.1px">buy</div>
<div class="t tr" style="right:693.3px;top:1430.1px">0.10</div>
<div class="t tr" style="right:615px;top:1430.1px">xauusd</div>
<div class="t tr" style="right:528.3px;top:1430.1px">4665.72</div>
<div class="t tr" style="right:440.70000000000005px;top:1430.1px">4658.38</div>
<div class="t tr" style="right:352.5px;top:1430.1px">0.00</div>
<div class="t tr" style="right:266px;top:1430.1px">4680.63</div>
<div class="t tr" style="right:179px;top:1430.1px">0.00</div>
<div class="t tr" style="right:91.5px;top:1430.1px">0.00</div>
<div class="t tl" style="left:1055px;top:1430.1px">149.00</div>
<div class="t tl" style="left:4px;top:1453.55px">55249858</div>
<div class="t tr" style="right:833.3px;top:1453.55px">2026.02.06 02:19:03</div>
<div class="t tr" style="right:755px;top:1453.55px">buy</div>
<div class="t tr" style="right:693.3px;top:1453.55px">0.10</div>
<div class="t tr" style="right:615px;top:1453.55px">xauusd</div>
<div class="t tr" style="right:528.3px;top:1453.55px">4666.07</div>
<div class="t tr" style="right:440.70000000000005px;top:1453.55px">4658.38</div>
<div class="t tr" style="right:352.5px;top:1453.55px">0.00</div>
<div class="t tr" style="right:266px;top:1453.55px">4680.63</div>
<div class="t tr" style="right:179px;top:1453.55px">0.00</div>
<div class="t tr" style="right:91.5px;top:1453.55px">0.00</div>
<div class="t tl" style="left:1055px;top:1453.55px">145.00</div>
<div class="t tl" style="left:4px;top:1477.0px">55250044</div>
<div class="t tr" style="right:833.3px;top:1477.0px">2026.02.06 02:19:50</div>
<div class="t tr" style="right:755px;top:1477.0px">buy</div>
<div class="t tr" style="right:693.3px;top:1477.0px">0.10</div>
<div class="t tr" style="right:615px;top:1477.0px">xauusd</div>
<div class="t tr" style="right:528.3px;top:1477.0px">4670.08</div>
<div class="t tr" style="right:440.70000000000005px;top:1477.0px">4658.38</div>
<div class="t tr" style="right:352.5px;top:1477.0px">0.00</div>
<div class="t tr" style="right:266px;top:1477.0px">4680.63</div>
<div class="t tr" style="right:179px;top:1477.0px">0.00</div>
<div class="t tr" style="right:91.5px;top:1477.0px">0.00</div>
<div class="t tl" style="left:1055px;top:1477.0px">105.00</div>
<div class="t tl" style="left:4px;top:1500.45px">55250068</div>
<div class="t tr" style="right:833.3px;top:1500.45px">2026.02.06 02:19:51</div>
<div class="t tr" style="right:755px;top:1500.45px">buy</div>
<div class="t tr" style="right:693.3px;top:1500.45px">0.10</div>
<div class="t tr" style="right:615px;top:1500.45px">xauusd</div>
<div class="t tr" style="right:528.3px;top:1500.45px">4670.15</div>
<div class="t tr" style="right:440.70000000000005px;top:1500.45px">4658.38</div>
<div class="t tr" style="right:352.5px;top:1500.45px">0.00</div>
<div class="t tr" style="right:266px;top:1500.45px">4680.63</div>
<div class="t tr" style="right:179px;top:1500.45px">0.00</div>
<div class="t tr" style="right:91.5px;top:1500.45px">0.00</div>
<div class="t tl" style="left:1055px;top:1500.45px">104.00</div>
<div class="t tl" style="left:4px;top:1523.9px">55250130</div>
<div class="t tr" style="right:833.3px;top:1523.9px">2026.02.06 02:19:59</div>
<div class="t tr" style="right:755px;top:1523.9px">buy</div>
<div class="t tr" style="right:693.3px;top:1523.9px">0.10</div>
<div class="t tr" style="right:615px;top:1523.9px">xauusd</div>
<div class="t tr" style="right:528.3px;top:1523.9px">4671.61</div>
<div class="t tr" style="right:440.70000000000005px;top:1523.9px">4658.38</div>
<div class="t tr" style="right:352.5px;top:1523.9px">0.00</div>
<div class="t tr" style="right:266px;top:1523.9px">4680.63</div>
<div class="t tr" style="right:179px;top:1523.9px">0.00</div>
<div class="t tr" style="right:91.5px;top:1523.9px">0.00</div>
<div class="t tl" style="left:1063px;top:1523.9px">90.00</div>
<div class="a" style="left:0px;top:1541px;width:1080px;height:1.5px;background:#8a8a8a;"></div>
<div class="a" style="left:0px;top:1542px;width:1080px;height:26px;background:#f0f0f0;"></div>
<div class="a" style="left:0px;top:1542px;width:33px;height:25px;background:#ffffff;border:1px solid #888;border-top:none;border-left:none"></div>
<div class="t" style="left:-5px;top:1546px;font-size:14.5px;color:#222;">交易</div>
<div class="t" style="left:44px;top:1546px;font-size:14px;color:#999;">展示</div>
<div class="t" style="left:95px;top:1546px;font-size:14px;color:#999;">账户历史</div>
<div class="t" style="left:174px;top:1546px;font-size:14px;color:#999;">新闻</div>
<div class="t" style="left:226px;top:1546px;font-size:14px;color:#999;">警报</div>
<div class="t" style="left:278px;top:1546px;font-size:14px;color:#999;">邮箱</div>
<div class="t" style="left:338px;top:1546px;font-size:14px;color:#999;">市场</div>
<div class="t" style="left:389px;top:1546px;font-size:14px;color:#999;">信号</div>
<div class="t" style="left:441px;top:1546px;font-size:14px;color:#999;">文章</div>
<div class="t" style="left:492px;top:1546px;font-size:14px;color:#999;">代码库</div>
<div class="t" style="left:557px;top:1546px;font-size:14px;color:#999;">EA</div>
<div class="t" style="left:599px;top:1546px;font-size:14px;color:#999;">日志</div>
<div class="t" style="left:308px;top:1550px;font-size:11px;color:#e02020;font-weight:bold">7</div>
<div class="a" style="left:84px;top:1546px;width:1px;height:17px;background:#b0b0b0;"></div>
<div class="a" style="left:163px;top:1546px;width:1px;height:17px;background:#b0b0b0;"></div>
<div class="a" style="left:215px;top:1546px;width:1px;height:17px;background:#b0b0b0;"></div>
<div class="a" style="left:267px;top:1546px;width:1px;height:17px;background:#b0b0b0;"></div>
<div class="a" style="left:327px;top:1546px;width:1px;height:17px;background:#b0b0b0;"></div>
<div class="a" style="left:378px;top:1546px;width:1px;height:17px;background:#b0b0b0;"></div>
<div class="a" style="left:430px;top:1546px;width:1px;height:17px;background:#b0b0b0;"></div>
<div class="a" style="left:481px;top:1546px;width:1px;height:17px;background:#b0b0b0;"></div>
<div class="a" style="left:546px;top:1546px;width:1px;height:17px;background:#b0b0b0;"></div>
<div class="a" style="left:587px;top:1546px;width:1px;height:17px;background:#b0b0b0;"></div>
<div class="a" style="left:638px;top:1546px;width:1px;height:17px;background:#b0b0b0;"></div>
<div class="a" style="left:0px;top:1567px;width:1080px;height:1px;background:#dcdcdc;"></div>
<div class="a" style="left:0px;top:1568px;width:1080px;height:29px;background:#f0f0f0;"></div>
<div class="t" style="left:-6px;top:1576px;font-size:14px;color:#333;">帮助,请按F1键</div>
<div class="t" style="left:279px;top:1576px;font-size:14.5px;color:#333;">Default</div>
<div class="a" style="left:274px;top:1569px;width:1px;height:27px;background:#d8d8d8;"></div>
<div class="a" style="left:419.5px;top:1569px;width:1px;height:27px;background:#d8d8d8;"></div>
<div class="a" style="left:556.5px;top:1569px;width:1px;height:27px;background:#d8d8d8;"></div>
<div class="a" style="left:647px;top:1569px;width:1px;height:27px;background:#d8d8d8;"></div>
<div class="a" style="left:737.5px;top:1569px;width:1px;height:27px;background:#d8d8d8;"></div>
<div class="a" style="left:824px;top:1569px;width:1px;height:27px;background:#d8d8d8;"></div>
<div class="a" style="left:912.5px;top:1569px;width:1px;height:27px;background:#d8d8d8;"></div>
<div class="a" style="left:999px;top:1569px;width:1px;height:27px;background:#d8d8d8;"></div>
<svg style="left:1002px;top:1576px" width="30" height="16" viewBox="0 0 30 16"><rect x="0.0" y="0" width="1.8" height="16" fill="#5a9a20"/><rect x="0.0" y="9" width="1.8" height="7" fill="#d05020"/><rect x="3.0" y="2" width="1.8" height="14" fill="#5a9a20"/><rect x="3.0" y="9" width="1.8" height="7" fill="#d05020"/><rect x="6.0" y="0" width="1.8" height="16" fill="#5a9a20"/><rect x="6.0" y="9" width="1.8" height="7" fill="#d05020"/><rect x="9.0" y="2" width="1.8" height="14" fill="#5a9a20"/><rect x="9.0" y="9" width="1.8" height="7" fill="#d05020"/><rect x="12.0" y="0" width="1.8" height="16" fill="#5a9a20"/><rect x="12.0" y="9" width="1.8" height="7" fill="#d05020"/><rect x="15.0" y="2" width="1.8" height="14" fill="#5a9a20"/><rect x="15.0" y="9" width="1.8" height="7" fill="#d05020"/><rect x="18.0" y="0" width="1.8" height="16" fill="#5a9a20"/><rect x="18.0" y="9" width="1.8" height="7" fill="#d05020"/><rect x="21.0" y="2" width="1.8" height="14" fill="#5a9a20"/><rect x="21.0" y="9" width="1.8" height="7" fill="#d05020"/><rect x="24.0" y="0" width="1.8" height="16" fill="#5a9a20"/><rect x="24.0" y="9" width="1.8" height="7" fill="#d05020"/><rect x="27.0" y="2" width="1.8" height="14" fill="#5a9a20"/><rect x="27.0" y="9" width="1.8" height="7" fill="#d05020"/></svg>
<div class="t" style="left:1036px;top:1576px;font-size:14.5px;color:#333;">16089</div>
<div class="a" style="left:0px;top:1597px;width:1080px;height:45.5px;background:#0c1826;"></div>
<div class="a" style="left:15px;top:1597px;width:374px;height:45px;background:#efefef;"></div>
<svg style="left:27px;top:1607px" width="24" height="24" viewBox="0 0 24 24"><circle cx="14" cy="9" r="6.5" fill="none" stroke="#222" stroke-width="2"/><path d="M9.5,13.5 L2,21" stroke="#222" stroke-width="2.2"/></svg>
<div class="t" style="left:62px;top:1611px;font-size:16px;color:#444;">在此键入进行搜索</div>
<svg style="left:405px;top:1607px" width="24" height="24" viewBox="0 0 24 24"><path d="M2,3 h13 M2,20 h13" stroke="#fff" stroke-width="2"/><rect x="3" y="8" width="11" height="7" fill="none" stroke="#fff" stroke-width="1.8"/><path d="M20,3 v3 M20,9 v11" stroke="#fff" stroke-width="2"/></svg>
<svg style="left:467px;top:1606px" width="20" height="26" viewBox="0 0 20 26"><path d="M1,1 h12 l6,6 v18 h-18z" fill="#f4f4f4"/><path d="M13,1 v6 h6" fill="#ccc"/></svg>
<div class="a" style="left:506px;top:1597px;width:56px;height:45px;background:#47545e;"></div>
<svg style="left:518px;top:1604px" width="30" height="28" viewBox="0 0 30 28"><path d="M8,1 h14 c6,0 8,4 8,8 c0,4 -3,7 -6,8 l6,10 h-7 l-5,-9 h-3 v9 h-7z" fill="#0a0a0a"/><path d="M2,27 L7,14 h6 l-1,13z" fill="#7a70e8"/></svg>
<svg style="left:577px;top:1605px" width="28" height="24" viewBox="0 0 28 24"><path d="M1,3 h9 l3,3 h14 v17 h-26z" fill="#e8b830"/><rect x="1" y="8" width="26" height="15" fill="#f6cf50"/><rect x="8" y="13" width="12" height="8" fill="#3d8ab0"/></svg>
<svg style="left:631px;top:1602px" width="32" height="30" viewBox="0 0 32 30"><circle cx="16" cy="8" r="6" fill="#4aaa50"/><circle cx="8" cy="17" r="7" fill="#e8a820"/><circle cx="24" cy="17" r="7" fill="#3a80d0"/><circle cx="16" cy="22" r="7" fill="#f0c030"/><circle cx="16" cy="15" r="5.5" fill="#fff"/><text x="12.5" y="20" font-size="11" font-weight="bold" fill="#e07a10" font-family="Liberation Sans">4</text></svg>
<svg style="left:692px;top:1603px" width="28" height="28" viewBox="0 0 28 28"><path d="M4,6 L22,2 L26,22 L8,26z" fill="#bfe4f4" stroke="#8ab8d0" stroke-width="1"/><path d="M4,6 L8,26 L6,26 L2,8z" fill="#5aa0c8"/><path d="M10,10 L20,8 M11,14 L21,12 M12,18 L22,16" stroke="#7ab8d8" stroke-width="1"/></svg>
<svg style="left:746px;top:1603px" width="30" height="30" viewBox="0 0 30 30"><circle cx="15" cy="15" r="13" fill="#1a7ad0"/><path d="M5,10 C8,1 24,0 28,12 C28,18 20,19 16,17 C12,15 18,10 22,12" fill="#3ac070"/><circle cx="15" cy="17" r="5.5" fill="#0b1522"/><path d="M9,20 C12,27 22,28 27,22" stroke="#1f9ae8" stroke-width="3" fill="none"/></svg>
<div class="a" style="left:453px;top:1640.5px;width:47px;height:2px;background:#a8c4e8;"></div>
<div class="a" style="left:506px;top:1640.5px;width:56px;height:2px;background:#a8c4e8;"></div>
<div class="a" style="left:567px;top:1640.5px;width:47px;height:2px;background:#a8c4e8;"></div>
<div class="a" style="left:625px;top:1640.5px;width:47px;height:2px;background:#a8c4e8;"></div>
<div class="a" style="left:682px;top:1640.5px;width:47px;height:2px;background:#a8c4e8;"></div>
<div class="a" style="left:739px;top:1640.5px;width:47px;height:2px;background:#a8c4e8;"></div>
<div class="a" style="left:878px;top:1597px;width:20px;height:45px;background:#ececec;"></div>
<svg style="left:880px;top:1601px" width="16" height="40" viewBox="0 0 16 40"><path d="M3,9 L8,4 L13,9" stroke="#333" stroke-width="1.6" fill="none"/><path d="M3,30 L8,35 L13,30" stroke="#333" stroke-width="1.6" fill="none"/></svg>
<svg style="left:903px;top:1613px" width="18" height="12" viewBox="0 0 18 12"><path d="M2,10 L9,3 L16,10" stroke="#fff" stroke-width="1.8" fill="none"/></svg>
<svg style="left:927px;top:1611px" width="24" height="22" viewBox="0 0 24 22"><path d="M3,7 h4 l5,-5 v16 l-5,-5 h-4z" fill="none" stroke="#fff" stroke-width="1.6"/><circle cx="17" cy="15" r="5.5" fill="#e83a4a"/><path d="M14.5,12.5 l5,5 M19.5,12.5 l-5,5" stroke="#fff" stroke-width="1.4"/></svg>
<svg style="left:957px;top:1609px" width="24" height="24" viewBox="0 0 24 24"><rect x="8" y="2" width="14" height="11" fill="none" stroke="#fff" stroke-width="1.6"/><path d="M2,2 v14 M2,6 h5 M15,13 v5 M9,19 h13" stroke="#fff" stroke-width="1.6"/></svg>
<div class="t" style="left:985px;top:1611px;font-size:18px;color:#fff;">中</div>
<div class="t" style="left:1010px;width:80px;text-align:center;top:1602px;font-size:14px;color:#fff">8:23</div>
<div class="t" style="left:1019px;top:1624.5px;font-size:14px;color:#fff;">2026/2/6</div>
<svg style="left:0px;top:1643px" width="1080" height="745" viewBox="0 0 1080 745">
<circle cx="982.5" cy="482" r="67" fill="#141414"/>
<circle cx="982.5" cy="647.3" r="67.8" fill="#141414"/>
<circle cx="951.8" cy="467.2" r="4.3" fill="#fff"/><circle cx="967.7" cy="467.2" r="4.3" fill="#fff"/><circle cx="983.6" cy="467.2" r="4.3" fill="#fff"/><circle cx="999.5" cy="467.2" r="4.3" fill="#fff"/><circle cx="1015.4" cy="467.2" r="4.3" fill="#fff"/><circle cx="960.2" cy="482.8" r="4.3" fill="#fff"/><circle cx="976.0" cy="482.8" r="4.3" fill="#fff"/><circle cx="991.8" cy="482.8" r="4.3" fill="#fff"/><circle cx="1007.6" cy="482.8" r="4.3" fill="#fff"/><rect x="961.5" y="496.3" width="44" height="6" rx="3" fill="#fff"/><path d="M963,640 L982.5,622.2 L1002.5,640" stroke="#df3f6e" stroke-width="5.6" fill="none" stroke-linecap="round" stroke-linejoin="round"/><path d="M963,655 L982.5,672 L1002.5,655" stroke="#df3f6e" stroke-width="5.6" fill="none" stroke-linecap="round" stroke-linejoin="round"/></svg>
<svg style="left:649px;top:2306px" width="40" height="46" viewBox="0 0 40 46"><path d="M13,2 h12 c8,0 13,5 13,13 v9 c0,8 -5,13 -13,13 h-5 l-7,8 l1,-8 c-8,0 -12,-5 -12,-13 v-9 c0,-8 4,-13 11,-13z" fill="#fff"/><path d="M29,9.5 c-5,-1.5 -9,0.5 -10,5 l-3.5,17 l-1.5,7" stroke="#000" stroke-width="5" fill="none" stroke-linecap="round"/><path d="M11,22 h16" stroke="#000" stroke-width="4.5" stroke-linecap="round"/></svg>
<div class="t" style="left:691px;top:2304px;font-size:37px;color:#fff;font-weight:500;letter-spacing:0.9px;text-shadow:2px 0 0 #000,-2px 0 0 #000,0 2px 0 #000,0 -2px 0 #000,1.5px 1.5px 0 #000,-1.5px -1.5px 0 #000,1.5px -1.5px 0 #000,-1.5px 1.5px 0 #000,0 0 3px #000">@学海无涯，回头是岸</div>
</body></html>
